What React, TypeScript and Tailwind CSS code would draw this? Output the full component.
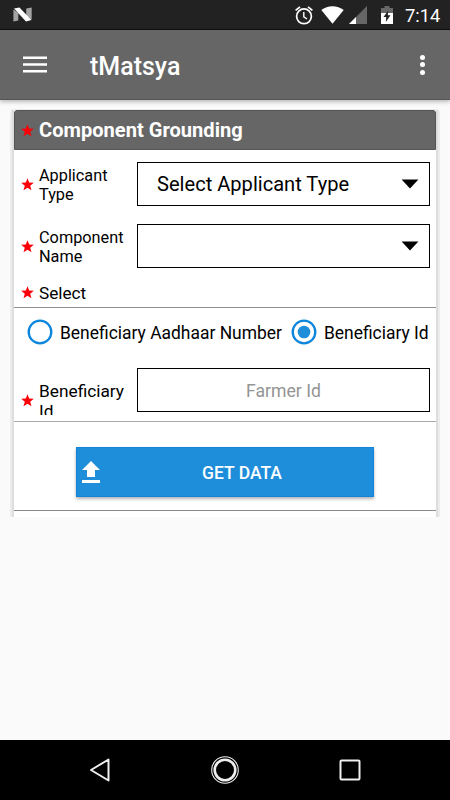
import { useState } from 'react';
import type { ReactNode } from 'react';

type SearchMode = 'aadhaar' | 'beneficiary';

const Star = () => (
    <svg width="13" height="13" viewBox="0 0 13 13" className="shrink-0">
        <path d="M6.5 0.2 L8.2 4.5 L12.8 4.7 L9.2 7.7 L10.5 12.3 L6.5 9.8 L2.5 12.3 L3.8 7.7 L0.2 4.7 L4.8 4.5 Z" fill="#fb0007" />
    </svg>
);

const Caret = () => (
    <svg width="18" height="10" viewBox="0 0 18 10" className="shrink-0">
        <path d="M0.6 0.5 H17.4 L9 9.4 Z" fill="#000" />
    </svg>
);

const StatusBar = () => (
    <div className="flex h-[30px] shrink-0 items-center border-b border-[#101010] bg-[#222222] pr-[9px] pl-[13px] text-white">
        <svg width="19" height="15" viewBox="0 0 19 15">
            <path d="M0.4 2.4 L5.3 6 V13.4 L0.4 14.6 Z" fill="#a3a3a3" />
            <path d="M13.2 1.4 L18.7 0.4 V12.6 L13.2 9 Z" fill="#a3a3a3" />
            <path d="M1 1.6 L6.4 0.4 L18.5 13 L13 14.6 Z" fill="#fff" />
        </svg>
        <svg width="18" height="19" viewBox="0 0 18 19" className="mt-[1px] ml-auto" fill="none" stroke="#fff">
            <circle cx="9" cy="10.3" r="7.4" strokeWidth="1.7" />
            <path d="M8.8 6 V10.8 L12 13" strokeWidth="1.4" />
            <path d="M0.6 4.4 L5 0.9 M13 0.9 L17.4 4.4" strokeWidth="1.8" />
        </svg>
        <svg width="23" height="18" viewBox="0 0 23 18" className="ml-[8px]">
            <path d="M0.3 4 C6.5 -1.1 16.5 -1.1 22.7 4 L11.5 17.8 Z" fill="#fff" />
        </svg>
        <svg width="18" height="18" viewBox="0 0 18 18" className="ml-[5px]">
            <path d="M18 0 V18 H0 Z" fill="#666" />
            <path d="M7 11 V18 H0 Z" fill="#fff" />
        </svg>
        <svg width="12" height="18" viewBox="0 0 12 18" className="ml-[14px]">
            <path d="M0 2 H3.5 V0 H8.5 V2 H12 V7 H0 Z" fill="#686868" />
            <path d="M0 7 H12 V18 H0 Z" fill="#fff" />
            <path d="M7.2 4.6 L2.5 11 H5.2 L4.8 16 L9.5 9.3 H6.8 Z" fill="#222" />
        </svg>
        <span className="ml-[12px] w-[36px] pt-[2px] text-[18.3px] leading-[28px] whitespace-nowrap">7:14</span>
    </div>
);

const AppBar = () => (
    <header className="z-10 flex h-[70px] shrink-0 items-center border-b border-[#565656] bg-[#666666] pr-[25px] pl-[23px] shadow-[0_2px_4px_rgba(0,0,0,0.25)]">
        <button aria-label="Menu">
            <svg width="24" height="17" viewBox="0 0 24 17" fill="#fff">
                <path d="M0 0.5 H24 V3 H0 Z M0 7.2 H24 V9.8 H0 Z M0 14 H24 V16.5 H0 Z" />
            </svg>
        </button>
        <h1 className="ml-[43px] pt-[4px] text-[25px] leading-[32px] font-medium text-white">tMatsya</h1>
        <button aria-label="More" className="ml-auto flex flex-col gap-[2.5px]">
            <span className="h-[5px] w-[5px] rounded-full bg-white" />
            <span className="h-[5px] w-[5px] rounded-full bg-white" />
            <span className="h-[5px] w-[5px] rounded-full bg-white" />
        </button>
    </header>
);

const SelectRow = ({ label, value }: { label: string; value: string }) => (
    <div className="flex h-[44px] items-center pr-[6px] pl-[7px]">
        <Star />
        <span className="ml-[5px] w-[98px] pt-[2px] pr-[10px] text-[16.3px] leading-[19px]">{label}</span>
        <button className="flex h-[44px] w-[293px] items-center justify-between border border-black pr-[10px] pl-[19px] text-[20.1px]">
            <span className="pt-[1px]">{value}</span>
            <Caret />
        </button>
    </div>
);

interface RadioProps {
    checked: boolean;
    onSelect: () => void;
    children: ReactNode;
}

const Radio = ({ checked, onSelect, children }: RadioProps) => (
    <button role="radio" aria-checked={checked} onClick={onSelect} className="flex items-center gap-[7px] text-[17.45px] whitespace-nowrap">
        <svg width="26" height="26" viewBox="0 0 26 26">
            <circle cx="13" cy="13" r="11.3" fill="none" stroke="#0b86dc" strokeWidth="2.3" />
            {checked && <circle cx="13" cy="13" r="6.3" fill="#1e8edb" />}
        </svg>
        <span className="pt-[2px]">{children}</span>
    </button>
);

const NavBar = () => (
    <nav className="flex h-[60px] shrink-0 items-center justify-between bg-black pr-[88px] pl-[89px]">
        <svg width="22" height="26" viewBox="0 0 22 26" fill="none" stroke="#eee" strokeWidth="2" strokeLinejoin="round">
            <path d="M19.5 2.5 V23.5 L2 13 Z" />
        </svg>
        <svg width="30" height="30" viewBox="0 0 30 30" fill="none" stroke="#eee">
            <circle cx="15" cy="15" r="13.3" strokeWidth="1.1" />
            <circle cx="15" cy="15" r="10.3" strokeWidth="2.6" />
        </svg>
        <svg width="24" height="24" viewBox="0 0 24 24" fill="none" stroke="#eee" strokeWidth="2">
            <rect x="2.5" y="2.5" width="19" height="19" rx="1" />
        </svg>
    </nav>
);

export default function App() {
    const [mode, setMode] = useState<SearchMode>('beneficiary');

    return (
        <div className="flex h-[800px] w-[450px] flex-col overflow-hidden bg-[#fafafa] font-[Roboto,sans-serif] text-black">
            <StatusBar />
            <AppBar />

            <main className="flex-1 px-[10px] pt-[9px]">
                <div className="h-[408px] rounded-t-[4px] border-x-2 border-t border-x-[#ececec] border-t-[#ececec] bg-white">
                    <div className="h-full border-x-2 border-[#dddddd]">
                        <div className="flex h-[40px] items-center rounded-t-[3px] border border-[#555555] bg-[#666666] pl-[6px]">
                            <Star />
                            <h2 className="ml-[5px] pt-[1px] text-[20.1px] font-bold text-white">Component Grounding</h2>
                        </div>

                        <div className="flex h-[158px] flex-col border-b border-[#929292] pt-[12px]">
                            <SelectRow label="Applicant Type" value="Select Applicant Type" />
                            <div className="mt-[18px]">
                                <SelectRow label="Component Name" value="" />
                            </div>
                            <div className="mt-[14px] flex items-center pl-[7px]">
                                <Star />
                                <span className="ml-[5px] pt-[1px] text-[17.2px] leading-[20px]">Select</span>
                            </div>
                        </div>

                        <div className="h-[114px] border-b border-[#aaaaaa] pt-[11px]">
                            <div role="radiogroup" className="flex h-[26px] items-center gap-[9px] pl-[13px]">
                                <Radio checked={mode === 'aadhaar'} onSelect={() => setMode('aadhaar')}>Beneficiary Aadhaar Number</Radio>
                                <Radio checked={mode === 'beneficiary'} onSelect={() => setMode('beneficiary')}>Beneficiary Id</Radio>
                            </div>
                            <div className="mt-[23px] flex h-[47px] items-start pl-[7px]">
                                <div className="mt-[26px]">
                                    <Star />
                                </div>
                                <span className="mt-[13px] ml-[5px] h-[34px] w-[98px] overflow-hidden pr-[10px] text-[17.3px] leading-[20px]">Beneficiary Id</span>
                                <input
                                    placeholder="Farmer Id"
                                    className="h-[44px] w-[293px] border border-black pt-[1px] text-center text-[17.6px] placeholder:text-[#949494]"
                                />
                            </div>
                        </div>

                        <div className="flex h-[89px] items-start justify-center border-b border-[#8a8a8a] pt-[25px]">
                            <button className="flex h-[50px] w-[298px] items-center border border-[#1384da] bg-[#1e8edb] pl-[5px] text-white shadow-[0_2px_3px_rgba(0,0,0,0.3)]">
                                <svg width="18" height="22" viewBox="0 0 18 22" fill="#fff">
                                    <path d="M9 0 L18 9 H13 V16 H5 V9 H0 Z" />
                                    <path d="M0 19 H18 V22 H0 Z" />
                                </svg>
                                <span className="flex-1 pt-[3px] pl-[11px] text-center text-[17.5px] font-medium">GET DATA</span>
                            </button>
                        </div>
                    </div>
                </div>
            </main>

            <NavBar />
        </div>
    );
}
